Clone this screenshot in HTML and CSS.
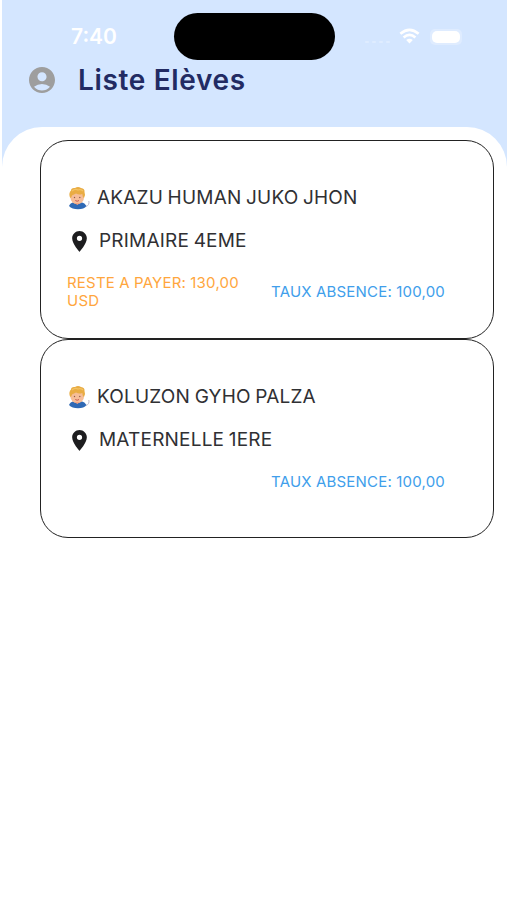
FILE: index.html
```html
<!DOCTYPE html>
<html lang="fr">
<head>
<meta charset="utf-8">
<title>Liste Elèves</title>
<link rel="stylesheet" href="styles.css">
</head>
<body>
<svg width="0" height="0" class="defs" aria-hidden="true">
  <symbol id="boy" viewBox="0 0 23 24">
    <path d="M1 20Q2 17 6 16L9 15.500L13 16Q17 17 18.500 20Q16 23.200 10 23.300Q4 23.200 1 20Z" fill="#2f69b5"/>
    <path d="M18 20.500Q21.800 19 20.800 15" fill="none" stroke="#c0bccd" stroke-width="1"/>
    <ellipse cx="9.200" cy="11.700" rx="6.800" ry="6.300" fill="#f6bd98"/>
    <path d="M1.800 11Q.5 7 3 4.500Q3 1.500 7 2Q10 0 13 2Q17 2.500 16.500 6Q17.800 9 16 12Q14.500 11 14.200 8Q11 9.300 8 7.500Q5 9 4 9.500Q3.500 11.500 2.500 12Z" fill="#e9ac43"/>
    <path d="M4 5Q7 2.500 10 4Q13 3 15 5" fill="none" stroke="#f3c364" stroke-width="1.300"/>
    <circle cx="6.500" cy="11.500" r=".7" fill="#8d5b48"/>
    <circle cx="11.800" cy="11.500" r=".7" fill="#8d5b48"/>
    <path d="M7.300 14.500Q9.200 16 11 14.500" fill="none" stroke="#c95951" stroke-width="1"/>
    <path d="M6.500 17L9.300 19L12 17" fill="#f3a27f"/>
  </symbol>
  <symbol id="pin" viewBox="5 2 14 20">
    <path d="M12 2C8.130 2 5 5.130 5 9c0 5.250 7 13 7 13s7-7.750 7-13c0-3.870-3.130-7-7-7zm0 9.500a2.500 2.500 0 0 1 0-5 2.500 2.500 0 0 1 0 5z" fill="#1d1d1f"/>
  </symbol>
</svg>
<div class="screen">
  <header class="header">
    <div class="status">
      <span class="time">7:40</span>
      <span class="island"></span>
      <span class="signal"><i></i><i></i><i></i><i></i></span>
      <svg class="wifi" viewBox="0 0 22 17">
        <g fill="none" stroke="#fff" stroke-width="2.800">
          <path d="M1.300 6.200Q11 -2.400 20.700 6.200"/>
          <path d="M4.700 10Q11 4.400 17.300 10"/>
        </g>
        <path d="M7.500 12.800Q11 9.800 14.500 12.800L11 16.500Z" fill="#fff"/>
      </svg>
      <span class="battery"><i></i></span>
    </div>
    <div class="titlebar">
      <svg class="account" viewBox="2 2 20 20">
        <circle cx="12" cy="12" r="9" fill="#d4e6ff"/>
        <path d="M12 2C6.480 2 2 6.480 2 12s4.480 10 10 10 10-4.480 10-10S17.520 2 12 2zm0 4c1.930 0 3.500 1.570 3.500 3.500S13.930 13 12 13s-3.500-1.570-3.500-3.500S10.070 6 12 6zm0 14c-2.030 0-4.430-.82-6.140-2.880a9.950 9.950 0 0 1 12.280 0C16.430 19.180 14.030 20 12 20z" fill="#9e9e9e"/>
      </svg>
      <h1>Liste Elèves</h1>
    </div>
  </header>
  <main class="sheet">
    <article class="card">
      <div class="row name"><svg class="boy"><use href="#boy"/></svg><span>AKAZU HUMAN JUKO JHON</span></div>
      <div class="row grade"><svg class="pin"><use href="#pin"/></svg><span>PRIMAIRE 4EME</span></div>
      <div class="facts"><span class="due">RESTE A PAYER: 130,00 USD</span><span class="absence">TAUX ABSENCE: 100,00</span></div>
    </article>
    <article class="card">
      <div class="row name"><svg class="boy"><use href="#boy"/></svg><span>KOLUZON GYHO PALZA</span></div>
      <div class="row grade"><svg class="pin"><use href="#pin"/></svg><span>MATERNELLE 1ERE</span></div>
      <div class="facts"><span class="due"></span><span class="absence">TAUX ABSENCE: 100,00</span></div>
    </article>
  </main>
</div>
</body>
</html>
```
FILE: styles.css
```css
* { box-sizing: border-box; }
body { margin: 0; background: #fff; font-family: Inter, sans-serif; }
.defs { display: none; }
.screen { height: 900px; margin-left: 2px; overflow: hidden; background: #fff; }
.header { height: 177px; background: #d4e6ff; padding-top: 13px; }
.status { height: 47px; display: flex; align-items: center; color: #fff; }
.time { width: 103px; margin-left: 69px; font-size: 21px; font-weight: 600; line-height: 26px; }
.island { width: 161px; height: 47px; border-radius: 24px; background: #000; }
.signal { display: flex; gap: 3px; margin: 10px 0 0 30px; width: 27px; }
.signal i { width: 4px; height: 2px; border-radius: 1px; background: #dfecff; }
.wifi { width: 21px; height: 16px; margin: 0 0 1px 7px; flex: none; }
.battery { width: 32px; height: 16px; margin-left: 10px; padding: 2px; border-radius: 5px; background: #dfecff; }
.battery i { display: block; width: 28px; height: 12px; border-radius: 5px; background: #fff; }
.titlebar { display: flex; align-items: center; height: 40px; padding-left: 27px; }
.account { width: 26px; height: 26px; margin-right: 23px; }
h1 { margin: 0; font-size: 28px; line-height: 36px; font-weight: 600; letter-spacing: .65px; color: #222b63; white-space: nowrap; }
.sheet { height: 773px; margin-top: -50px; border-radius: 40px 40px 0 0; background: #fff; padding: 13px 13px 0 38px; }
.card { height: 199px; border: 1.500px solid #222; border-radius: 28px; padding: 43px 26px 0; }
.row { display: flex; align-items: center; color: #303033; font-size: 19px; letter-spacing: .2px; word-spacing: -1px; white-space: nowrap; }
.name { height: 28px; }
.name span { margin-bottom: 1px; }
.grade { height: 28px; margin-top: 15px; }
.grade span { margin-bottom: 2px; }
.boy { width: 23px; height: 24px; margin: 0 6px 0 1px; }
.pin { width: 15px; height: 21px; margin: 1px 12px 0 5px; }
.facts { display: flex; align-items: center; min-height: 36px; margin-top: 19px; font-size: 15px; line-height: 18px; letter-spacing: .22px; word-spacing: -.3px; }
.due { width: 204px; padding-right: 20px; color: #ffa63d; }
.absence { color: #409eeb; white-space: nowrap; }
.card:last-child .facts { margin-top: 10px; }
```
